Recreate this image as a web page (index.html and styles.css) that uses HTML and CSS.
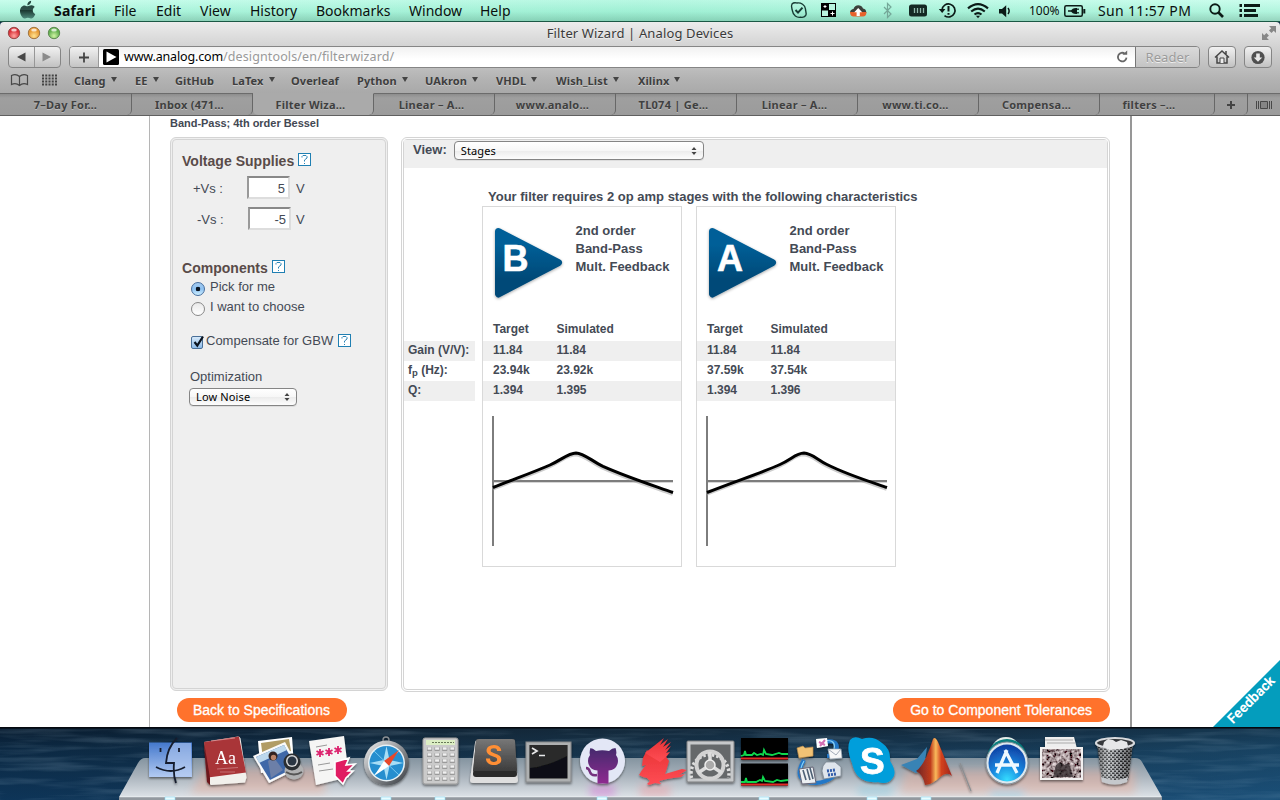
FILE: index.html
```html
<!DOCTYPE html>
<html lang="en">
<head>
<meta charset="utf-8">
<title>Filter Wizard | Analog Devices</title>
<link rel="stylesheet" href="styles.css">
</head>
<body>
<header class="menubar">
  <svg class="apple" viewBox="0 0 54 22" width="54" height="22"><defs><linearGradient id="ap" x2="0" y2="1"><stop offset="0" stop-color="#24483f"/><stop offset=".5" stop-color="#2c5048"/><stop offset=".55" stop-color="#1c3932"/><stop offset="1" stop-color="#4e8a7c"/></linearGradient></defs><path d="M27.5 6.2c1.500-.1 2.200-1 4-.9 1.500.1 2.600.8 3.200 1.700-2.900 1.900-2.300 5.800.6 7-.7 1.900-2.100 4.400-3.700 4.500-1.300 0-1.800-.8-3.700-.8s-2.300.8-3.500.8c-2-.2-4.300-4-4.400-7.300-.1-3.600 2.200-5.800 4.600-5.800 1.200 0 2 .8 2.900.8zM27.300 5.300c-.2-2.200 1.500-4.200 3.800-4.500.3 2.200-1.600 4.500-3.800 4.500z" fill="url(#ap)"/></svg>
  <nav class="menus"><b>Safari</b><span>File</span><span>Edit</span><span>View</span><span>History</span><span>Bookmarks</span><span>Window</span><span>Help</span></nav>
  <div class="status">
    <svg viewBox="788 0 24 22" width="24" height="22" fill="none" stroke="#173a33" stroke-width="1.400"><path d="M792 4c2-2 4-1 5-1 4-.6 8 2 8.500 6-.2 2 1.500 4 .2 6.500-1.500 2-3.500 2-5 1.700-4 .8-7.600-2-8.200-6-.2-2-2-4.800-.5-7.200z"/><path d="M795.500 10l2.500 2.600 4.500-5" stroke-width="2"/></svg>
    <svg viewBox="812 0 31 22" width="31" height="22"><path d="M821 3h15v14h-15z"/><path d="M829 4h6v6h-6zM822 10.500h6v5.500h-6z" fill="#b9f5df"/><path d="M823.500 6.500h3M825 5v3M830.500 13.500h4M832.500 11.500v4" stroke="#fff"/></svg>
    <svg viewBox="843 0 30 22" width="30" height="22"><path d="M850 13c0-3 2-4 3.500-4 1-5 8-5 9.500-.5 2.300.1 3.300 2 3.300 4.500z" fill="#3c403a"/><path d="M850 12h16.500c0 3-1.500 4.500-3.500 4.500h-9.500c-2 0-3.500-1.500-3.500-4.500z" fill="#e7622b"/><path d="M858.200 8l4 4.300h-2.400v3.700h-3.200v-3.700h-2.400z" fill="#fff"/></svg>
    <svg viewBox="873 0 27 22" width="27" height="22" fill="none" stroke="#74a798" stroke-width="1.200"><path d="M884 7l7 7-3.500 3.500v-14l3.500 3.500-7 7"/></svg>
    <svg viewBox="900 0 33 22" width="33" height="22"><rect x="909" y="4.500" width="18" height="12" rx="2.500" fill="#142923"/><path d="M914.500 8v5M917.500 8v5M920.500 8v5M923.500 8v5" stroke="#90b8aa" stroke-width="1.300"/></svg>
    <svg viewBox="933 0 29 22" width="29" height="22" fill="none" stroke="#0c1b17" stroke-width="1.700"><path d="M942 10a6.500 6.500 0 1 1 2.500 5.600"/><path d="M938.800 9h6.600l-3.200 4z" fill="#0c1b17" stroke="none"/><path d="M948.500 6v5.500M948.500 13v1.700" stroke-width="2"/></svg>
    <svg viewBox="962 0 32 22" width="32" height="22" fill="none" stroke="#0c1b17" stroke-width="2.200"><path d="M968 8.300q10-8.500 20 0M971.200 11.500q6.800-5.600 13.600 0M974.500 14.500q3.500-2.800 7 0"/><path d="M975.900 15.700h4.200l-2.100 2.600z" fill="#0c1b17" stroke="none"/></svg>
    <svg viewBox="994 0 35 22" width="35" height="22"><path d="M999 9h3l4.200-3.800v12l-4.200-3.700h-3z" fill="#0c1b17"/><path d="M1008 8q2.300 3 0 6" fill="none" stroke="#0c1b17" stroke-width="1.500"/></svg>
    <span class="pct">100%</span>
    <svg viewBox="1062 0 36 22" width="36" height="22"><rect x="1064.800" y="5.800" width="17.500" height="10.500" rx="1.500" fill="none" stroke="#0c1b17" stroke-width="1.500"/><path d="M1083.300 9h2v4.500h-2z" fill="#0c1b17"/><path d="M1068 11h4M1078 8.500v1.500M1078 12v1.500" stroke="#0c1b17" stroke-width="1.600"/><path d="M1071 11q1-3 5-3h1v6h-1q-4 0-5-3z" fill="#0c1b17"/></svg>
    <span class="clock">Sun 11:57 PM</span>
    <svg viewBox="1200 0 80 22" width="80" height="22" fill="none" stroke="#0c1b17"><circle cx="1215" cy="9" r="4.700" stroke-width="1.900"/><path d="M1218.500 12.500l4.500 4.500" stroke-width="2.600"/><path d="M1239.500 5.500h2.500M1239.500 10.500h2.500M1239.500 15.500h2.500M1244 5.500h16M1244 10.500h12M1244 15.500h14" stroke-width="2.900"/></svg>
  </div>
</header>

<section class="chrome">
  <div class="titlebar">
    <svg class="lights" viewBox="0 22 80 24" width="80" height="24"><defs><radialGradient id="lr" cy=".75"><stop offset="0" stop-color="#ffa5a0"/><stop offset="1" stop-color="#d93038"/></radialGradient><radialGradient id="ly" cy=".75"><stop offset="0" stop-color="#ffe391"/><stop offset="1" stop-color="#e79a35"/></radialGradient><radialGradient id="lg" cy=".75"><stop offset="0" stop-color="#d1f4a5"/><stop offset="1" stop-color="#63b050"/></radialGradient></defs><g stroke-width=".9"><circle cx="14" cy="33" r="5.700" fill="url(#lr)" stroke="#91403e"/><circle cx="34" cy="33" r="5.700" fill="url(#ly)" stroke="#986c38"/><circle cx="54" cy="33" r="5.700" fill="url(#lg)" stroke="#56814a"/></g><g fill="#fff" opacity=".75"><ellipse cx="14" cy="30" rx="2.800" ry="1.500"/><ellipse cx="34" cy="30" rx="2.800" ry="1.500"/><ellipse cx="54" cy="30" rx="2.800" ry="1.500"/></g></svg>
    <span class="title">Filter Wizard | Analog Devices</span>
    <svg class="expand" viewBox="1260 22 20 24" width="20" height="24" fill="#878787"><path d="M1269 26h7v7l-2.300-2.300-2.200 2.200-2.500-2.500 2.200-2.200zM1262 33v7h7l-2.300-2.300 2.200-2.200-2.500-2.500-2.200 2.200z"/></svg>
  </div>
  <div class="toolbar">
    <div class="btn nav"><svg viewBox="8 46 53 22" width="53" height="22"><path d="M17 57l8.500-4.500v9z" fill="#484848"/><path d="M51 57l-8.500-4.500v9z" fill="#8b8b8b"/><path d="M34.500 47v20" stroke="#979797"/></svg></div>
    <div class="address">
      <div class="plus"><svg viewBox="0 0 29 20" width="29" height="20"><path d="M14 5.500v10M9 10.500h10" stroke="#444" stroke-width="1.800"/></svg></div>
      <div class="field"><svg viewBox="0 0 16 16" width="16" height="16"><rect width="16" height="16" rx="1.500"/><path d="M3.500 2.500l10 5.500-10 5.500z" fill="#fff"/></svg><span class="host">www.analog.com</span><span class="path">/designtools/en/filterwizard/</span>
      <svg class="reload" viewBox="0 0 14 16" width="14" height="16"><path d="M9.800 4.600a4.300 4.300 0 1 0 1.700 4" fill="none" stroke="#666" stroke-width="1.800"/><path d="M7.500 5.800h4.700V1.500z" fill="#666"/></svg></div>
      <div class="reader">Reader</div>
    </div>
    <div class="btn sq"><svg viewBox="0 0 26 20" width="26" height="20"><path d="M6 10.500l7-6.500 7 6.500M8 9.500v6.500h10v-6.500M17 7V4" fill="none" stroke="#464646" stroke-width="1.500"/><path d="M11 16v-5h4v5" fill="#eee" stroke="#464646"/></svg></div>
    <div class="btn sq"><svg viewBox="0 0 26 20" width="26" height="20"><circle cx="13" cy="10.500" r="6.600" fill="#4f4f4f"/><path d="M11.200 6.500h3.600v4h2.500l-4.300 4.300-4.300-4.300h2.500z" fill="#e9e9e9"/></svg></div>
  </div>
  <nav class="bookmarks">
    <svg viewBox="0 69 74 24" width="74" height="24"><path d="M19.500 77.500q-3.500-3-8-1v9q4.500-2 8 1 3.500-3 8-1v-9q-4.500-2-8 1zv9" fill="none" stroke="#484848" stroke-width="1.200"/><path d="M42 76.500h15M42 79.500h15M42 82.500h15M42 85.500h15" stroke="#444" stroke-width="2" stroke-dasharray="2 1.250"/></svg>
    <span class="dd">Clang</span><span class="dd">EE</span><span>GitHub</span><span class="dd">LaTex</span><span>Overleaf</span><span class="dd">Python</span><span class="dd">UAkron</span><span class="dd">VHDL</span><span class="dd">Wish_List</span><span class="dd">Xilinx</span>
  </nav>
  <div class="tabs">
    <div class="tab first">7–Day For…</div><div class="tab">Inbox (471…</div><div class="tab active">Filter Wiza…</div><div class="tab">Linear – A…</div><div class="tab">www.analo…</div><div class="tab">TL074 | Ge…</div><div class="tab">Linear – A…</div><div class="tab">www.ti.co…</div><div class="tab">Compensa…</div><div class="tab last">filters –…</div>
    <div class="tab add"><svg viewBox="0 0 10 10" width="10" height="10"><path d="M5 1v8M1 5h8" stroke="#444" stroke-width="2"/></svg></div>
    <div class="tab all"><svg viewBox="0 0 16 10" width="16" height="10" stroke="#484848"><path d="M.5 1v8M2.500 1v8M13.500 1v8M15.500 1v8"/><path d="M4.500 1.500h7v7h-7z" fill="#858585"/></svg></div>
  </div>
</section>

<main class="viewport">
  <div class="site">
    <div class="crumb">Band-Pass; 4th order Bessel</div>
    <div class="panels">
      <aside class="panel side">
        <h2>Voltage Supplies <i class="help"><svg viewBox="0 0 11 11" width="11" height="11"><path d="M3 3.500V2.500L4 1.500h3l1 1v1.500L5.500 6v1.500M5.500 9v1" fill="none" stroke="#2b83b5"/></svg></i></h2>
        <div class="volt"><label>+Vs :</label><span class="num">5</span><span>V</span></div>
        <div class="volt neg"><label>-Vs :</label><span class="num">-5</span><span>V</span></div>
        <h2 class="comp">Components <i class="help"><svg viewBox="0 0 11 11" width="11" height="11"><path d="M3 3.500V2.500L4 1.500h3l1 1v1.500L5.500 6v1.500M5.500 9v1" fill="none" stroke="#2b83b5"/></svg></i></h2>
        <div class="choice"><i class="radio on"></i>Pick for me</div>
        <div class="choice"><i class="radio"></i>I want to choose</div>
        <div class="choice check"><i class="box"><svg viewBox="0 0 14 15" width="14" height="15"><path d="M3.500 8l2.800 3.500L12 2.500" fill="none" stroke="#0b1420" stroke-width="2.200"/></svg></i>Compensate for GBW <i class="help"><svg viewBox="0 0 11 11" width="11" height="11"><path d="M3 3.500V2.500L4 1.500h3l1 1v1.500L5.500 6v1.500M5.500 9v1" fill="none" stroke="#2b83b5"/></svg></i></div>
        <div class="opt">Optimization</div>
        <div class="select small"><span>Low Noise</span><svg viewBox="0 0 6 10" width="6" height="10"><path d="M3 1l2.500 3h-5zM3 9l2.500-3h-5z" fill="#444"/></svg></div>
      </aside>
      <section class="panel work">
        <div class="viewbar"><b>View:</b><div class="select wide"><span>Stages</span><svg viewBox="0 0 6 10" width="6" height="10"><path d="M3 1l2.500 3h-5zM3 9l2.500-3h-5z" fill="#444"/></svg></div></div>
        <h3>Your filter requires 2 op amp stages with the following characteristics</h3>
        <div class="stages">
          <div class="labels"><div>Gain (V/V):</div><div>f<sub>p</sub> (Hz):</div><div>Q:</div></div>
          <article class="stage">
            <div class="head">
              <svg viewBox="0 0 80 84" width="80" height="84"><defs><linearGradient id="tri" x2="0" y2="1"><stop offset=".2" stop-color="#005f98"/><stop offset=".75" stop-color="#004a78"/></linearGradient><filter id="sh" x="-20%" y="-20%" width="140%" height="140%"><feDropShadow dx="0" dy="1" stdDeviation="1.500" flood-opacity=".35"/></filter></defs><path d="M15.500 10.500L75.500 41.700L15.500 73z" fill="url(#tri)" stroke="url(#tri)" stroke-width="7" stroke-linejoin="round" filter="url(#sh)"/><text class="letter" x="19.500" y="49.500">B</text></svg>
              <p>2nd order<br>Band-Pass<br>Mult. Feedback</p>
            </div>
            <div class="row th"><span>Target</span><span>Simulated</span></div>
            <div class="row g"><span>11.84</span><span>11.84</span></div>
            <div class="row"><span>23.94k</span><span>23.92k</span></div>
            <div class="row g"><span>1.394</span><span>1.395</span></div>
            <svg class="chart" viewBox="0 0 190 132" width="190" height="132"><path d="M2 66.500h179" stroke="#bbb" opacity=".6"/><path d="M1 0v130M0 65h181" stroke="#7d7d7d" stroke-width="2"/><path d="M1 71.500C25 62 42 56 58 49C70 43.500 76 37.300 84 37C92 37.300 99 44.500 111 50.300C135 61 160 69 181 76.500" transform="translate(-.5 2)" fill="none" stroke="#999" stroke-width="2.500" opacity=".5"/><path d="M1 71.500C25 62 42 56 58 49C70 43.500 76 37.300 84 37C92 37.300 99 44.500 111 50.300C135 61 160 69 181 76.500" fill="none" stroke="#000" stroke-width="3"/></svg>
          </article>
          <article class="stage">
            <div class="head">
              <svg viewBox="0 0 80 84" width="80" height="84"><path d="M15.500 10.500L75.500 41.700L15.500 73z" fill="url(#tri)" stroke="url(#tri)" stroke-width="7" stroke-linejoin="round" filter="url(#sh)"/><text class="letter" x="20" y="49.500">A</text></svg>
              <p>2nd order<br>Band-Pass<br>Mult. Feedback</p>
            </div>
            <div class="row th"><span>Target</span><span>Simulated</span></div>
            <div class="row g"><span>11.84</span><span>11.84</span></div>
            <div class="row"><span>37.59k</span><span>37.54k</span></div>
            <div class="row g"><span>1.394</span><span>1.396</span></div>
            <svg class="chart" viewBox="0 0 190 132" width="190" height="132"><path d="M2 66.500h179" stroke="#bbb" opacity=".6"/><path d="M1 0v130M0 65h181" stroke="#7d7d7d" stroke-width="2"/><path d="M1 76.500C30 65 55 57 74 48.500C86 43 90 37.300 98 37C106 37.300 111 43.500 121 48.500C142 59 165 66 181 71.500" transform="translate(-.5 2)" fill="none" stroke="#999" stroke-width="2.500" opacity=".5"/><path d="M1 76.500C30 65 55 57 74 48.500C86 43 90 37.300 98 37C106 37.300 111 43.500 121 48.500C142 59 165 66 181 71.500" fill="none" stroke="#000" stroke-width="3"/></svg>
          </article>
        </div>
      </section>
    </div>
    <div class="actions"><span class="pill">Back to Specifications</span><span class="pill">Go to Component Tolerances</span></div>
  </div>
  <svg class="feedback" viewBox="0 0 67 67" width="67" height="67"><path d="M67 0v67H0z" fill="#049dbd"/><text transform="translate(20 64.500) rotate(-45)">Feedback</text></svg>
</main>

<footer class="dock">
<svg viewBox="0 727 1280 73" width="1280" height="73">
<defs>
<linearGradient id="sea" x2="0" y2="1"><stop offset="0" stop-color="#07131f"/><stop offset=".3" stop-color="#0d2c45"/><stop offset="1" stop-color="#114470"/></linearGradient>
<linearGradient id="seaR"><stop offset="0" stop-color="#0a2540" stop-opacity=".5"/><stop offset=".4" stop-color="#1b3448" stop-opacity=".6"/><stop offset=".75" stop-color="#254b68" stop-opacity=".4"/><stop offset="1" stop-color="#235a80" stop-opacity=".5"/></linearGradient>
<filter id="waves" x="0" y="0" width="1" height="1"><feTurbulence type="fractalNoise" baseFrequency=".012 .14" numOctaves="3" seed="8"/><feColorMatrix values="0 0 0 0 .45  0 0 0 0 .62  0 0 0 0 .75  1.600 0 0 0 -.7"/></filter>
<linearGradient id="shelf" x2="0" y2="1"><stop offset="0" stop-color="#8494a0"/><stop offset=".45" stop-color="#a8b2bb"/><stop offset="1" stop-color="#dde2e7"/></linearGradient>
<linearGradient id="blue" x2="0" y2="1"><stop offset="0" stop-color="#4478cc"/><stop offset="1" stop-color="#b2caf2"/></linearGradient>
<linearGradient id="silver" x2="1" y2="1"><stop offset="0" stop-color="#f4f4f4"/><stop offset=".5" stop-color="#8e9195"/><stop offset="1" stop-color="#33383d"/></linearGradient>
<linearGradient id="red" x2="0" y2="1"><stop offset="0" stop-color="#e83435"/><stop offset="1" stop-color="#ff4c55"/></linearGradient>
<linearGradient id="purple" x2="0" y2="1"><stop offset="0" stop-color="#452a6d"/><stop offset="1" stop-color="#8e2c90"/></linearGradient>
<linearGradient id="mat"><stop offset="0" stop-color="#6d2525"/><stop offset=".4" stop-color="#bf3b1e"/><stop offset=".55" stop-color="#f9b95b"/><stop offset=".7" stop-color="#d3421e"/><stop offset="1" stop-color="#9e251d"/></linearGradient>
<radialGradient id="store" cy=".95" r=".9"><stop offset="0" stop-color="#35dcff"/><stop offset=".5" stop-color="#1683dc"/><stop offset="1" stop-color="#1043a5"/></radialGradient>
<linearGradient id="dark" x2="0" y2="1"><stop offset="0" stop-color="#777"/><stop offset="1" stop-color="#3d3d3d"/></linearGradient>
<pattern id="mesh" width="4" height="4" patternUnits="userSpaceOnUse"><rect width="4" height="4" fill="#b4b7ba"/><path d="M0 .5h2.500v1.500H0zM2 2.500h2.500v1.500H2z" fill="#1f2225"/></pattern>
<linearGradient id="cyl"><stop offset="0" stop-color="#222" stop-opacity=".6"/><stop offset=".35" stop-color="#fff" stop-opacity=".2"/><stop offset=".7" stop-color="#222" stop-opacity=".2"/><stop offset="1" stop-color="#222" stop-opacity=".6"/></linearGradient>
<filter id="photo" x="0" y="0" width="1" height="1"><feTurbulence type="fractalNoise" baseFrequency=".3" numOctaves="2" seed="4"/><feColorMatrix values="1.500 0 0 0 -.38  1.400 0 0 0 -.40  1.400 0 0 0 -.39  0 0 0 0 1"/></filter>
<filter id="soft" x="-50%" y="-50%" width="200%" height="200%"><feGaussianBlur stdDeviation="4"/></filter>
<filter id="ds" x="-20%" y="-20%" width="140%" height="150%"><feDropShadow dx="0" dy="1.500" stdDeviation="1.300" flood-opacity=".5"/></filter>
</defs>
<rect y="727" width="1280" height="73" fill="url(#sea)"/><rect y="727" width="1280" height="73" fill="url(#seaR)"/><rect y="729" width="1280" height="71" filter="url(#waves)" opacity=".28"/>
<path d="M0 727h1280v1.500H0z" fill="#05090f"/>
<path d="M145 758h990q5 0 7 4l20 35H119l19-34q3-5 7-5z" fill="url(#shelf)"/>
<g filter="url(#soft)" opacity=".4"><path d="M205 768h120v26H190zM905 770h230v24H900z" fill="#f0a891"/><path d="M858 786h34v10h-34zM990 790h34v8h-34z" fill="#77c9e2"/><path d="M590 785h25v12h-25z" fill="#d75bd5"/><path d="M640 785h30v12h-30z" fill="#f78c92"/></g>
<path d="M119 797h1043v3H119z" fill="#93999f"/><path d="M120 796.800h1041" stroke="#edf0f2" stroke-width=".8"/>
<g fill="#e9fcff" stroke="#8fdaf5" stroke-width=".6"><path d="M165 797h10v3h-10zM381 797h10v3h-10zM435 797h10v3h-10zM597 797h10v3h-10zM759 797h10v3h-10zM867 797h10v3h-10zM921 797h10v3h-10z"/></g>
<g filter="url(#ds)">
 <g><path d="M149 742.500h43v34.500h-43z" fill="url(#blue)"/><path d="M171 743h20v33h-17l1-12h-8q1-13 4-21z" fill="#b9cdf0" opacity=".55"/><path d="M177 738q-10 10-11 25h8q-1 12 2 20M156 767q15 8 29 0M160.500 748v4M179 748v4" fill="none" stroke="#151e2d" stroke-width="1.800"/></g>
 <g><path d="M204 742l34-5.500q2 0 2.500 2l6 39-1.500 5-34 2.500-3-3z" fill="#f2f0ec"/><path d="M204 742l35-5.500 7 36-38 5z" fill="#a93439"/><path d="M204 742l6 36v7l-3-3-3-36z" fill="#6c181c"/><path d="M211 741l24-3" stroke="#d99" stroke-width=".8"/><path d="M217 769l21-1.500M220 772h15" stroke="#d28b8b" stroke-width=".7"/><text x="215" y="764" font-family="Liberation Serif" font-size="18" fill="#fff">Aa</text></g>
 <g><path d="M258 741l34-4 2 30-33 6z" fill="#fff"/><path d="M261 743l28-4 2 12-28 8z" fill="#b19c65"/><path d="M253 756l32-14 14 26-30 15z" fill="#fafafa"/><path d="M256 757l28-12 12 22-26 13z" fill="#3f68a8"/><path d="M256 757l28-12 3 5-28 13z" fill="#bdd8ee"/><path d="M268 761q3-3 7-2l8 11-12 8z" fill="#6c7fa8"/><circle cx="273" cy="756" r="4.500" fill="#302321"/><circle cx="273.500" cy="757.500" r="2.700" fill="#b98369"/><ellipse cx="294" cy="771" rx="9.500" ry="8.500" fill="#b0b1b2"/><path d="M286 772q8 5 16 0" fill="none" stroke="#555" stroke-width="2"/><circle cx="292" cy="762" r="8.500" fill="#2b2d30"/><circle cx="292" cy="761" r="6" fill="#d5d6d7"/><circle cx="292" cy="761" r="4.500" fill="#2b3442"/></g>
 <g><path d="M309 741l35-5 5 41-33 8z" fill="#f5f5f4"/><g stroke="#dc246e" stroke-width="1.800"><path d="M320 749v8M316.500 751l7 4M323.500 751l-7 4M329 748v8M325.500 750l7 4M332.500 750l-7 4M338 746v8M334.500 748l7 4M341.500 748l-7 4"/></g><path d="M316 747l11-2M318 765l12-2M319 771l14-2" stroke="#999"/><path d="M335 762l14-4-3 7 9-1-7 7h5l-7 7-3 6-8-8z" fill="#e01c62" stroke="#fff" stroke-width="1.600"/></g>
 <g><circle cx="386" cy="740" r="3" fill="none" stroke="#8a8e92" stroke-width="1.300"/><circle cx="386.500" cy="763" r="22.500" fill="url(#silver)"/><circle cx="386.500" cy="763" r="18.500" fill="#e9f2f6"/><circle cx="386.500" cy="763" r="17" fill="#278ecf"/><path d="M386.500 746l3 14 14 3-14 3-3 14-3-14-14-3 14-3z" fill="#a7ddf6"/><path d="M374 751l25 24M399 751l-25 24" stroke="#77c7ef"/><path d="M399 750l-10 16-5-5z" fill="#e8472a"/><path d="M374 776l10-15 5 5z" fill="#fff"/></g>
 <g><rect x="423" y="738" width="35" height="46" rx="2" fill="#cacaca" stroke="#9a9a9a"/><rect x="426" y="740" width="29" height="5" fill="#dceec4"/><path d="M432 742.500h22" stroke="#687a59" stroke-width="1.200" stroke-dasharray="2 1"/><path d="M427 749h28M427 755h28M427 761h28M427 767h28M427 773h28M427 779h28" stroke="#8a8a8a" stroke-width="3.600" stroke-dasharray="5 2.600"/><path d="M427.500 748.500h28M427.500 754.500h28M427.500 760.500h28M427.500 766.500h28M427.500 772.500h28M427.500 778.500h28" stroke="#f0f0f0" stroke-width="2.300" stroke-dasharray="4 3.600"/></g>
 <g><path d="M475 743q0-3 3-3h32q3 0 3 3l5 37q0 3-3 3h-42q-3 0-3-3z" fill="#dedede"/><path d="M476 741q0-2 3-2h33q3 0 3 2l2 33q0 3-3 3h-38q-3 0-3-3z" fill="#292929"/><path d="M476 741q0-2 3-2h33q3 0 3 2l2 30h-44z" fill="url(#dark)"/><text x="485" y="765" font-family="Roboto" font-weight="bold" font-size="28" fill="#ff8f35">S</text></g>
 <g><rect x="526" y="742" width="45" height="40" fill="#aeb0b1" stroke="#858789"/><rect x="529.500" y="745" width="38" height="33.500" fill="#101112"/><path d="M530 768q18-2 37-12v-11h-37z" fill="#292a2b"/><path d="M532 748l5 3-5 3M539 755.500h6" stroke="#e9e9e9" stroke-width="1.700" fill="none"/></g>
 <g><circle cx="602.500" cy="761" r="22.500" fill="#e3e7f6"/><path d="M589.500 748q3.500 0 6.500 3 6-1.600 13 0 3-3 6.500-3 1.500 4 .5 7 3 4 1.500 9-2 6-9 6.500v13h-11v-13q-7-.5-9-6.500-1.500-5 1.500-9-1-3 .500-7z" fill="url(#purple)"/><path d="M597 775q-6 1-7-3t-4-4" fill="none" stroke="#74307f" stroke-width="2.500"/></g>
 <g fill="url(#red)"><path d="M639 775l3-5 4-5-4 1 1-8 4-8 3 3 10-5 9 13-2 7-2 6 17-5 5 1-8 5 6-1-4 3-8 1-6 1-8 2 2 3-6-1-6 2-2-1 3-3-3-3-4-1z"/><path d="M645 753l19-15-4 7 8-6-5 8 8-5-6 8 6-4-5 7 4-1-4 5-6 5z"/></g>
 <g><rect x="687" y="741" width="47" height="41" rx="1" fill="#c6c8ca" stroke="#7c7e80"/><rect x="690.500" y="744.500" width="40" height="34" fill="#65686b"/><g fill="none"><path d="M691.500 778a19 19 0 1 1 37 0" stroke="#dedede" stroke-width="3.500" stroke-dasharray="2.500 2"/><circle cx="710" cy="765" r="13.500" stroke="#d2d2d2" stroke-width="4"/></g><path d="M710 765V752M710 765l-12 8M710 765l12 8" stroke="#dcdcdc" stroke-width="3.500"/><circle cx="710" cy="765" r="5" fill="#aaa" stroke="#eee" stroke-width="1.500"/></g>
 <g><path d="M741 738h47v22h-47zM741 763.500h47v22h-47z"/><path d="M741 758.500h47M741 784.500h47" stroke="#e22a28" stroke-width="2"/><path d="M741 756l3-1 1-4 1 4h6l2-2 3 2 4-1 2 1 1-5 2 4 6 1 7-2 3 1h6M741 782h4l1-4 1 4h9l4-2 2 1 1-4 2 4 8 1 4-2 4 1 7-1" fill="none" stroke="#0dd74d" stroke-width="1.800"/></g>
 <g><path d="M817 744q24-8 19 8-3 4-9 4M804 760q-13 22 12 23 20-2 22-17" fill="none" stroke="#2477c7" stroke-width="4"/><path d="M818 742q19-5 16 7M804 761q-8 14 3 20" fill="none" stroke="#88d1f8" stroke-width="1.200"/><path d="M797 748l6-2 2 2 8-1v9l-14 2z" fill="#f1c274" stroke="#ba8b4c" stroke-width=".6"/><path d="M816 739l11-1 1 8-11 2z" fill="#fff"/><path d="M819 742l6 3M825 740l-5 6" stroke="#d46fb4" stroke-width="2"/><path d="M828 749l13 0 1 9-12 1z" fill="#f7f7f7" stroke="#9aa7b5" stroke-width=".6"/><path d="M828 749l8 6 5-6" stroke="#a3abb7" fill="none"/><path d="M799 769l14-2 3 16-14 1z" fill="#edf0f3" stroke="#667"/><path d="M803 770l3 10M807 769l3 11M810 768l3 11" stroke="#4d6175" stroke-width="1.600"/><path d="M823 766l3-4 9 0 6 5v9l-17 3-2-8z" fill="#dfe5ec" stroke="#76818e" stroke-width=".7"/><path d="M827 771l8-1M828 775l8-1" stroke="#325caa" stroke-width="3" stroke-dasharray="2 1"/></g>
 <g><path d="M850 740q4-5 12-1 11-4 20 4 9 6 8 18 8 12 2 18-5 6-14 3-22 2-26-19-6-14-2-23z" fill="#009edb"/><text x="860" y="774" font-family="Liberation Sans" font-weight="bold" font-size="37" fill="#fff" stroke="#fff" stroke-width=".8">S</text></g>
 <g><path d="M901 765l16-6 10-12-3 20-8 6z" fill="#3983b5"/><path d="M916 771q9-6 17-32 2-3 5 3l14 34q-5-5-12 1-7 7-15 8-2-11-9-14z" fill="url(#mat)"/></g>
 <path d="M960 763l11 28" stroke="#8b8f92" stroke-width="1.200"/>
 <g><circle cx="1006" cy="752" r="15" fill="#e4ece9"/><circle cx="1007" cy="759" r="20" fill="#087e7d"/><circle cx="1007" cy="763" r="21" fill="#dce8ef" stroke="#85919a"/><circle cx="1007" cy="763" r="18.500" fill="url(#store)"/><path d="M1007 750l-10 23M1005 750l12 23M995 765h24" stroke="#eef9ff" stroke-width="3.300"/></g>
 <g><path d="M1045 737h29l3 12h-32z" fill="#eee"/><path d="M1045 740h28M1047 743h28" stroke="#aaa"/><rect x="1040" y="747" width="43" height="33" fill="#f2f0f0"/><rect x="1042" y="749" width="39" height="29" filter="url(#photo)"/><path d="M1053 777l3-12 4-3 4 3 5-2 4 14z" fill="#211a1c" opacity=".7"/></g>
 <g><path d="M1097 743h36l-5 37q-2 4-13 4t-13-4z" fill="url(#mesh)"/><path d="M1097 743h36l-5 37q-2 4-13 4t-13-4z" fill="url(#cyl)"/><ellipse cx="1115" cy="743" rx="19" ry="5" fill="#35383b" stroke="#d8dadd" stroke-width="2.200"/><path d="M1103 746l1-4 4-3 5 1 3 2 5-2 6 2 1 4-5 3-14 1z" fill="#e6e7e8"/><path d="M1101 777q14 6 27 0l-1 5q-12 5-25 0z" fill="#c5c8cc"/></g>
</g>
</svg>
</footer>
</body>
</html>
```

FILE: styles.css
```css
* { box-sizing: border-box; }
html, body { margin: 0; height: 100%; overflow: hidden; }
body { width: 1280px; height: 800px; display: flex; flex-direction: column; background: #0d2c45; font-family: "Liberation Sans", Arial, sans-serif; }
svg { display: block; flex: none; }
h2, h3, p { margin: 0; }
i { font-style: normal; }

/* system menu bar */
.menubar { flex: none; height: 22px; display: flex; background: linear-gradient(90deg, rgba(255,255,255,.05), rgba(110,220,180,.16) 50%, rgba(255,255,255,.1)), linear-gradient(#c6fdeb, #a9f3da 55%, #89cfb6); border-bottom: 1px solid #1b5845; font: 14px/21px "Noto Sans", sans-serif; color: #0b0f0e; white-space: nowrap; }
.menus { display: flex; width: 734px; letter-spacing: 0; }
.menus > * { flex: none; }
.menus > :nth-child(1) { width: 60px; letter-spacing: .2px; }
.menus > :nth-child(2) { width: 42px; }
.menus > :nth-child(3) { width: 44px; }
.menus > :nth-child(4) { width: 50px; }
.menus > :nth-child(5) { width: 66px; }
.menus > :nth-child(6) { width: 93px; }
.menus > :nth-child(7) { width: 71px; }
.status { display: flex; }
.pct { width: 33px; font-size: 12px; }
.clock { width: 102px; letter-spacing: .33px; }

/* browser window */
.chrome { flex: none; height: 94px; background: linear-gradient(#ececec, #d2d2d2 25px, #b2b2b2 58px, #a9a9a9 71px); border-radius: 4px 4px 0 0; font-family: "Noto Sans", sans-serif; }
.titlebar { height: 24px; display: flex; font-size: 13px; line-height: 23px; color: #3a3a3a; }
.title { flex: 1; padding-right: 61px; text-align: center; letter-spacing: .13px; text-shadow: 0 1px #fff8; }
.expand { margin-left: -1px; }
.toolbar { height: 22px; display: flex; padding-left: 8px; gap: 8px; }
.btn { height: 22px; border: 1px solid #858585; border-radius: 4px; background: linear-gradient(#f1f1f1, #c2c2c2); }
.nav { width: 53px; }
.nav svg { margin: -1px; }
.sq { width: 28px; }
.address { width: 1131px; display: flex; border: 1px solid #858585; border-radius: 4px; overflow: hidden; }
.plus { width: 29px; background: linear-gradient(#f1f1f1, #c4c4c4); border-right: 1px solid #999; }
.field { flex: 1; display: flex; align-items: center; padding: 0 6px 0 4px; background: linear-gradient(#f1f1f1, #fff 60%); font-size: 12.5px; line-height: 20px; }
.host { margin-left: 5px; letter-spacing: -.16px; color: #000; }
.path { color: #999; letter-spacing: .13px; }
.reload { margin-left: auto; }
.reader { width: 64px; text-align: center; font-size: 13px; line-height: 20px; letter-spacing: .1px; color: #9b9b9b; border-left: 1px solid #777; background: linear-gradient(#dadada, #c4c4c4); text-shadow: 0 1px #eee; }
.bookmarks { height: 25px; display: flex; font-size: 11px; font-weight: bold; line-height: 24px; color: #3e3e3e; text-shadow: 0 1px #c8c8c8; letter-spacing: .1px; white-space: nowrap; }
.bookmarks span { flex: none; display: flex; align-items: center; }
.bookmarks .dd::after { content: ""; margin: -2px 0 0 5px; border: 3.5px solid transparent; border-top: 5px solid #444; border-bottom: 0; }
.bookmarks span:nth-of-type(1) { width: 61px; }
.bookmarks span:nth-of-type(2) { width: 40px; }
.bookmarks span:nth-of-type(3) { width: 57px; }
.bookmarks span:nth-of-type(4) { width: 59px; }
.bookmarks span:nth-of-type(5) { width: 66px; }
.bookmarks span:nth-of-type(6) { width: 68px; }
.bookmarks span:nth-of-type(7) { width: 71px; }
.bookmarks span:nth-of-type(8) { width: 60px; }
.bookmarks span:nth-of-type(9) { width: 82px; }
.tabs { height: 23px; display: flex; background: #9c9c9c; border-bottom: 1px solid #606060; font-size: 11px; font-weight: bold; color: #404040; line-height: 21px; letter-spacing: .25px; text-shadow: 0 1px #bbb; }
.tab { flex: none; width: 121px; padding-right: 5px; text-align: center; border-top: 1px solid #6c6c6c; border-right: 1px solid #676767; border-radius: 0 0 5px 0; background: linear-gradient(#8d8d8d, #9f9f9f 4px, #9b9b9b); white-space: nowrap; }
.tab.first { width: 132px; padding-right: 0; }
.tab.active { background: #aaa; border-top-color: #aaa; border-radius: 0 0 5px 5px; }
.tab.last { width: 115px; padding-right: 16px; }
.tab.add, .tab.all { display: flex; align-items: center; justify-content: center; padding: 0; }
.tab.add { width: 33px; }
.tab.all { width: 32px; border-right: 0; border-radius: 0; }

/* page */
.viewport { position: relative; flex: none; height: 611px; background: #fff; overflow: hidden; }
.site { margin-left: 149px; width: 983px; height: 611px; padding-left: 20px; border-left: 1px solid #b5b5b5; border-right: 2px solid #979797; }
.crumb { height: 21px; font-size: 11px; font-weight: bold; line-height: 15px; letter-spacing: -.03px; color: #434853; }
.panels { display: flex; gap: 13px; height: 555px; align-items: flex-start; }
.panel { border: 3px double #d4d4d4; border-radius: 6px; font-size: 13px; color: #444a55; }
.side { width: 218px; height: 554px; background: #efefef; padding-top: 11px; }
h2 { height: 20px; padding-left: 9px; display: flex; align-items: center; gap: 4px; font-size: 14px; line-height: 20px; color: #594b49; letter-spacing: .03px; }
h2 .help { margin-top: -3px; }
.help { width: 13px; height: 13px; border: 1px solid #1f7fb2; background: #fff; }
.volt { display: flex; align-items: center; height: 23px; line-height: 23px; margin: 5px 0 0 20px; }
.volt label { width: 54px; padding-top: 1px; }
.volt span:last-child { padding-top: 1px; }
.num { width: 43px; height: 23px; padding-right: 3px; margin-right: 6px; text-align: right; line-height: 22px; background: #fff; border: 2px solid #ddd; border-top-color: #888; border-left-color: #999; }
.neg { margin: 8px 0 0 24px; }
.neg label { width: 51px; }
.neg .num { margin-right: 5px; }
.comp { margin-top: 28px; }
.choice { display: flex; height: 20px; line-height: 20px; padding-left: 18px; }
.comp + .choice { margin-top: -1px; }
.radio { width: 14px; height: 14px; margin: 5px 5px 0 0; border: 1px solid #888; border-radius: 50%; background: linear-gradient(#e9e9e9, #fff); }
.radio.on { border-color: #466d9e; background: radial-gradient(circle at 50% 50%, #091321 0 2px, transparent 2.600px), linear-gradient(#a3c9ef, #8ec1f1 50%, #cceeff); }
.check { margin-top: 14px; }
.box { width: 12px; height: 13px; margin: 5px 3px 0 0; border: 1px solid #496f98; border-radius: 2px; background: linear-gradient(#d5e8f9, #8dbbe9); }
.box svg { margin: -3px 0 0 -1px; overflow: visible; }
.check .help { margin: 3px 0 0 5px; }
.opt { margin: 16px 0 1px 17px; height: 20px; line-height: 20px; }
.select { display: flex; justify-content: space-between; align-items: center; border: 1px solid #858585; border-radius: 4px; background: linear-gradient(#fff, #f7f7f7 50%, #ececec 52%, #fdfdfd); color: #000; font: 11px/16px "Noto Sans", sans-serif; letter-spacing: .15px; padding: 0 6px; box-shadow: 0 1px #ddd; }
.small { width: 108px; height: 18px; margin-left: 16px; }
.wide { width: 250px; height: 19px; margin: 1px 0 0 7px; }
.work { width: 709px; height: 555px; background: #fff; }
.viewbar { display: flex; height: 28px; padding-left: 9px; background: #efefef; line-height: 20px; }
h3 { margin-top: 20px; padding-left: 84px; height: 18px; font-size: 13px; line-height: 18px; }
.stages { display: flex; gap: 14px; align-items: flex-start; font-weight: bold; }
.labels { width: 71px; margin: 135px -7px 0 0; font-size: 12px; line-height: 18px; }
.labels div { height: 20px; padding-left: 4px; white-space: nowrap; }
.labels div:nth-child(odd) { background: #efefef; }
.labels sub { font-size: 9.5px; line-height: 0; vertical-align: -2px; }
.stage { width: 200px; height: 361px; border: 1px solid #d9d9d9; }
.head { display: flex; height: 112px; padding-top: 14px; }
.head svg { margin-right: 12px; overflow: visible; }
.head p { line-height: 18px; padding: 1px 0 0 .5px; }
.letter { font: bold 36px "Liberation Sans", sans-serif; fill: #fff; stroke: #fff; stroke-width: .6px; }
.row { display: flex; height: 20px; padding-left: 10px; font-size: 12px; line-height: 18px; }
.row span { width: 63.500px; }
.row.g { background: #efefef; }
.row.th { height: 22px; line-height: 20px; }
.chart { margin: 15px 0 0 9px; }
.actions { display: flex; justify-content: space-between; padding: 6px 20px 0 7px; }
.pill { height: 24px; border-radius: 12px; padding: 0 17px 0 16px; font-size: 14px; line-height: 24px; color: #fff; background: #ff722c; -webkit-text-stroke: .3px #fff; }
.pill:last-child { padding: 0 18px 0 17px; }
.feedback { position: absolute; right: 0; bottom: 0; }
.feedback text { font: bold 14px Roboto, sans-serif; fill: #fff; }
.dock { height: 73px; }
```
